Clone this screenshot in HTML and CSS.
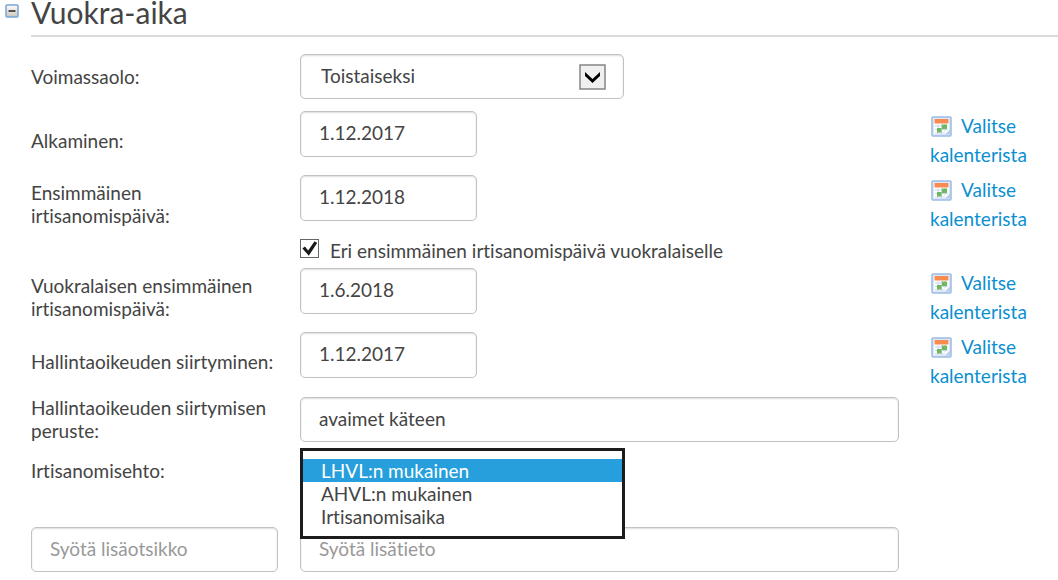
FILE: index.html
```html
<!DOCTYPE html>
<html lang="fi">
<head>
  <meta charset="UTF-8">
  <meta name="viewport" content="width=device-width, initial-scale=1.0">
  <title>Vuokra-aika</title>
  <link rel="stylesheet" href="styles.css">
</head>
<body>
  <svg class="defs" aria-hidden="true">
    <symbol id="calendar" viewBox="0 0 21 21">
      <rect x="1" y="1" width="19" height="19" rx="1" fill="#dbe8f9" stroke="#9dbae3" stroke-width="1.5"/>
      <rect x="3" y="3" width="15" height="15" fill="#fff"/>
      <rect x="3.500" y="3" width="14" height="4.500" fill="#f98b50"/>
      <path d="M4 10h13M4 13.500h13M4 17h10M7 8v10M10.500 8v10M14 8v7" stroke="#cbd7e8" fill="none"/>
      <rect x="11" y="8.500" width="5" height="4.500" fill="#6fb860"/>
      <rect x="6" y="12" width="4.500" height="4.500" fill="#6fb860"/>
      <path d="M14 18.500l5-5v5z" fill="#b9cdec"/>
    </symbol>
  </svg>
  <div class="section-head">
    <button type="button" class="toggle" aria-label="Piilota osio">
      <svg width="14" height="14" viewBox="0 0 14 14">
        <defs>
          <linearGradient id="toggle-fill" x1="0" y1="0" x2="0" y2="1">
            <stop offset="0" stop-color="#fff"/>
            <stop offset="1" stop-color="#c9c5ba"/>
          </linearGradient>
        </defs>
        <rect x="1" y="1" width="12" height="12" rx="1" fill="url(#toggle-fill)" stroke="#78a5d8" stroke-width="1.5"/>
        <path d="M3.5 7h7" stroke="#222" stroke-width="1.5"/>
      </svg>
    </button>
    <h2 class="title">Vuokra-aika</h2>
  </div>
  <form class="form">
    <div class="row row-first">
      <label class="label" for="validity">Voimassaolo:</label>
      <div class="select-wrap">
        <select id="validity" class="control select">
          <option>Toistaiseksi</option>
        </select>
        <svg class="arrow" width="27" height="26" viewBox="0 0 27 26">
          <rect x="1" y="1" width="25" height="24" fill="#f0f0f0" stroke="#858585" stroke-width="1.5"/>
          <path d="M6 8l7.500 7 7.500-7v4l-7.500 7-7.500-7z" fill="#000"/>
        </svg>
      </div>
    </div>
    <div class="row">
      <label class="label" for="start">Alkaminen:</label>
      <input id="start" class="control date" type="text" value="1.12.2017">
      <a class="pick" href="#"><svg class="cal"><use href="#calendar"/></svg>Valitse kalenterista</a>
    </div>
    <div class="row">
      <label class="label" for="first-notice">Ensimmäinen irtisanomispäivä:</label>
      <input id="first-notice" class="control date" type="text" value="1.12.2018">
      <a class="pick" href="#"><svg class="cal"><use href="#calendar"/></svg>Valitse kalenterista</a>
    </div>
    <div class="row">
      <div class="check-row">
        <input id="tenant-differs" class="check" type="checkbox" checked>
        <label for="tenant-differs">Eri ensimmäinen irtisanomispäivä vuokralaiselle</label>
      </div>
    </div>
    <div class="row">
      <label class="label" for="tenant-notice">Vuokralaisen ensimmäinen irtisanomispäivä:</label>
      <input id="tenant-notice" class="control date" type="text" value="1.6.2018">
      <a class="pick" href="#"><svg class="cal"><use href="#calendar"/></svg>Valitse kalenterista</a>
    </div>
    <div class="row">
      <label class="label" for="transfer">Hallintaoikeuden siirtyminen:</label>
      <input id="transfer" class="control date" type="text" value="1.12.2017">
      <a class="pick" href="#"><svg class="cal"><use href="#calendar"/></svg>Valitse kalenterista</a>
    </div>
    <div class="row">
      <label class="label" for="basis">Hallintaoikeuden siirtymisen peruste:</label>
      <input id="basis" class="control" type="text" value="avaimet käteen">
    </div>
    <div class="row row-terms">
      <label class="label" for="terms">Irtisanomisehto:</label>
      <div class="list-anchor">
        <select id="terms" class="list" size="3">
          <option selected>LHVL:n mukainen</option>
          <option>AHVL:n mukainen</option>
          <option>Irtisanomisaika</option>
        </select>
      </div>
    </div>
    <div class="row">
      <input class="control extra-title" type="text" placeholder="Syötä lisäotsikko" aria-label="Lisäotsikko">
      <input class="control" type="text" placeholder="Syötä lisätieto" aria-label="Lisätieto">
    </div>
  </form>
</body>
</html>
```
FILE: styles.css
```css
* {
  box-sizing: border-box;
}

body {
  margin: 0;
  background: #fff;
  color: #444;
  font-family: Lato, "Open Sans", sans-serif;
  font-size: 19px;
  line-height: 23px;
  font-variant-ligatures: none;
}

input, select, button {
  font: inherit;
  font-variant-ligatures: none;
  color: inherit;
}

.defs {
  display: none;
}

.section-head {
  display: flex;
  align-items: flex-start;
  padding-left: 5px;
}

.toggle {
  width: 26px;
  padding: 4px 0 0;
  border: 0;
  background: none;
  text-align: left;
  line-height: 0;
}

.title {
  flex: 1;
  margin: 0;
  padding-bottom: 11px;
  border-bottom: 2px solid #dadada;
  font-size: 30px;
  font-weight: normal;
  line-height: 24px;
}

.form {
  display: flex;
  flex-direction: column;
  gap: 6px;
  padding: 17px 0 0 31px;
}

.row {
  display: grid;
  grid-template-columns: 269px 1fr 128px;
  align-items: center;
}

.row-first {
  margin-bottom: 6px;
}

.row-terms {
  min-height: 45px;
  margin-bottom: 28px;
}

.label {
  padding-right: 22px;
}

.control {
  width: calc(100% - 31px);
  height: 45px;
  padding: 0 18px 2px;
  border: 1px solid #c2c2c2;
  border-radius: 5px;
  background: #fff;
  box-shadow: inset 0 1px 2px #ddd;
}

.control::placeholder {
  color: #999;
}

.date {
  align-self: start;
  width: 177px;
  height: 46px;
  padding-bottom: 4px;
}

.extra-title {
  width: 247px;
}

.select-wrap {
  display: grid;
  align-items: center;
  width: 324px;
}

.select-wrap > * {
  grid-area: 1 / 1;
}

.select {
  width: 100%;
  padding: 0 20px 2px;
  appearance: none;
}

.arrow {
  justify-self: end;
  margin-right: 18px;
  pointer-events: none;
}

.pick {
  color: #0b8fd0;
  line-height: 29px;
  text-decoration: none;
}

.cal {
  width: 21px;
  height: 21px;
  margin: 0 9px 0 1px;
  vertical-align: -4px;
}

.check-row {
  display: flex;
  grid-column: 2;
  gap: 11px;
}

.check {
  width: 19px;
  height: 19px;
  margin: 0;
  appearance: none;
  border: 1px solid #666;
  background: #fff;
}

.check:checked::before {
  content: "";
  display: block;
  height: 100%;
  background: #1a1a1a;
  clip-path: polygon(8% 50%, 23% 38%, 42% 62%, 80% 8%, 95% 18%, 46% 92%);
}

/* open list lies over the row below it */
.list-anchor {
  position: relative;
  align-self: start;
}

.list {
  position: absolute;
  top: 0;
  left: 0;
  z-index: 1;
  width: 325px;
  padding: 8px 0;
  border: 3px solid #1c1c1c;
  border-radius: 0;
  outline: 0;
  background: #fff;
  overflow: hidden;
}

.list option {
  min-height: 23px;
  padding: 0 18px;
}

.list option:checked {
  background: #269fdc linear-gradient(#269fdc, #269fdc);
  color: #fff;
  -webkit-text-fill-color: #fff;
}
```
